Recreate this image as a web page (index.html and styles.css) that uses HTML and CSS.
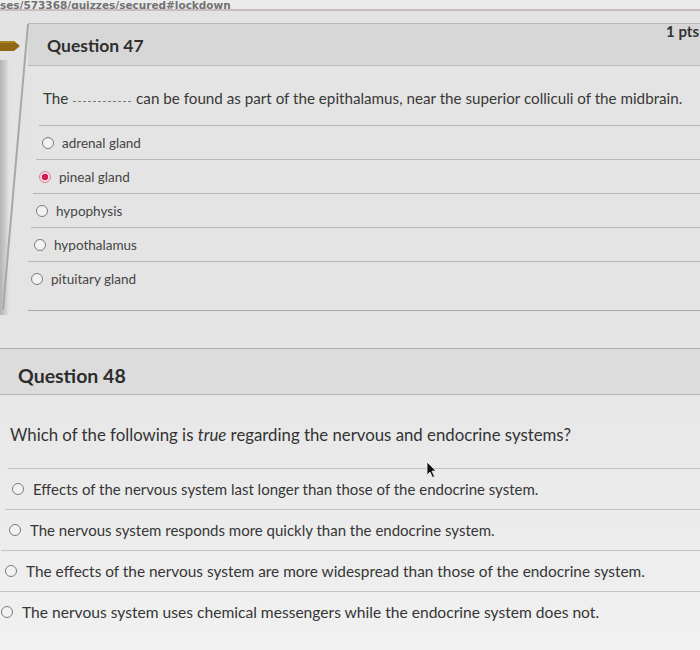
FILE: index.html
```html
<!DOCTYPE html>
<html lang="en">
<head>
<meta charset="utf-8">
<title>Quiz</title>
<link rel="stylesheet" href="styles.css">
</head>
<body>
<div class="page">
  <div class="urlbar"><span class="url">ses/573368/quizzes/secured#lockdown</span></div>
  <div class="q47wrap">
    <div class="flagcol">
      <svg class="flag" width="22" height="12" viewBox="0 0 22 12"><polygon points="0,1 15,1 21,6 15,11 0,11" fill="#8e6812"/><polygon points="0,1 15,1 17,3 0,3" fill="#a98324"/></svg>
    </div>
    <div class="card q47">
      <div class="qhead">
        <h2 class="qtitle">Question 47</h2>
        <span class="pts">1 pts</span>
      </div>
      <div class="qbody">
        <p class="qtext">The <span class="blank"></span> can be found as part of the epithalamus, near the superior colliculi of the midbrain.</p>
        <ul class="answers">
          <li class="ans"><span class="radio"></span>adrenal gland</li>
          <li class="ans"><span class="radio checked"></span>pineal gland</li>
          <li class="ans"><span class="radio"></span>hypophysis</li>
          <li class="ans"><span class="radio"></span>hypothalamus</li>
          <li class="ans"><span class="radio"></span>pituitary gland</li>
        </ul>
      </div>
    </div>
  </div>
  <div class="card q48">
    <div class="qhead">
      <h2 class="qtitle">Question 48</h2>
    </div>
    <div class="qbody">
      <p class="qtext">Which of the following is <em>true</em> regarding the nervous and endocrine systems?</p>
      <ul class="answers">
        <li class="ans"><span class="radio"></span>Effects of the nervous system last longer than those of the endocrine system.</li>
        <li class="ans"><span class="radio"></span>The nervous system responds more quickly than the endocrine system.</li>
        <li class="ans"><span class="radio"></span>The effects of the nervous system are more widespread than those of the endocrine system.</li>
        <li class="ans"><span class="radio"></span>The nervous system uses chemical messengers while the endocrine system does not.</li>
      </ul>
    </div>
  </div>
  <svg class="cursor" width="12" height="18" viewBox="0 0 12 18"><path d="M1 1 L1 14 L4 11 L6.5 16.5 L8.5 15.5 L6 10 L10 10 Z" fill="#111" stroke="#eee" stroke-width="0.8"/></svg>
</div>
</body>
</html>
```
FILE: styles.css
```css
* { box-sizing: border-box; margin: 0; padding: 0; }
html, body { width: 700px; height: 650px; overflow: hidden; }
body {
  background: #e6e6e6;
  font-family: Lato, "Open Sans", "Liberation Sans", sans-serif;
  color: #3a3a3a;
}
.page {
  position: relative;
  width: 700px;
  height: 650px;
  overflow: hidden;
  background: linear-gradient(180deg, #e3e3e3 0%, #e4e4e4 50%, #eaeaea 72%, #f1f1f1 100%);
}
.page::before {
  content: "";
  position: absolute;
  left: 0;
  top: 60px;
  width: 9px;
  height: 255px;
  background: linear-gradient(90deg, #b3b3b3 0%, #cdcdcd 60%, rgba(220,220,220,0) 100%);
}
.urlbar {
  height: 11px;
  border-bottom: 2px solid #c9bdbd;
  background: #ececec;
  overflow: hidden;
}
.url {
  display: block;
  font-family: "DejaVu Sans", sans-serif;
  font-weight: bold;
  font-size: 10.5px;
  line-height: 10px;
  margin-top: 0;
  color: #727272;
}
.q47wrap {
  display: flex;
  margin-top: 12px;
}
.flagcol {
  width: 28px;
  flex: none;
  padding-top: 17px;
  position: relative;
}
.flag { display: block; margin-left: -1px; }
.card {
  position: relative;
  flex: 1;
}
.q47 {
  background: #e4e4e4;
  border-top: 1px solid #b9b9b9;
  border-bottom: 1px solid #a9a9a9;
}
.q47::before {
  content: "";
  position: absolute;
  left: -1px;
  top: 0;
  bottom: 0;
  width: 1.5px;
  background: #a8a8a8;
  transform-origin: top left;
  transform: skewX(-5deg);
}
.qhead {
  display: flex;
  justify-content: space-between;
  align-items: center;
  background: #d7d7d7;
  border-bottom: 1px solid #bcbcbc;
}
.q47 .qhead {
  height: 42px;
  padding-left: 19px;
}
.qtitle {
  font-weight: 700;
  color: #2f2f2f;
}
.q47 .qtitle { font-size: 17.5px; line-height: 20px; padding-top: 2px; }
.pts {
  align-self: flex-start;
  font-size: 15px;
  font-weight: 700;
  line-height: 14px;
  margin-right: 1px;
  color: #333;
}
.q47 .qbody {
  padding: 23px 0 15px 0;
}
.q47 .qtext {
  font-size: 15.2px;
  line-height: 18px;
  padding-left: 15px;
  color: #383838;
}
.blank {
  display: inline-block;
  width: 58px;
  height: 1px;
  border-bottom: 1px dashed #7a7a7a;
  vertical-align: 2px;
  margin: 0 1px;
}
.answers { list-style: none; }
.q47 .answers { margin-top: 18px; }
.ans {
  display: flex;
  align-items: center;
  border-top: 1px solid #b8b8b8;
}
.q47 .ans {
  height: 34px;
  padding-left: 3px;
  font-size: 13.5px;
  color: #454545;
}
.q47 .ans:nth-child(1) { margin-left: 11px; }
.q47 .ans:nth-child(2) { margin-left: 8px; }
.q47 .ans:nth-child(3) { margin-left: 5px; }
.q47 .ans:nth-child(4) { margin-left: 3px; }
.q47 .ans:nth-child(5) { margin-left: 0; }
.radio {
  flex: none;
  width: 12px;
  height: 12px;
  border-radius: 50%;
  border: 1.5px solid #7c7c7c;
  background: #f2f2f2;
  margin-right: 8px;
}
.radio.checked {
  border-color: #d9819a;
  background: radial-gradient(circle, #d01f55 0 3px, #f6d9e1 3.5px);
}
.q48 {
  margin-top: 37px;
}
.q48 .qhead {
  height: 47px;
  border-top: 1px solid #adadad;
  border-bottom: 1px solid #b3b3b3;
  background: #dcdcdc;
  padding: 8px 0 0 18px;
}
.q48 .qtitle {
  font-size: 19.5px;
  line-height: 22px;
  color: #2d2d2d;
}
.q48 .qbody { padding-top: 30px; }
.q48 .qtext {
  font-size: 16.8px;
  line-height: 20px;
  padding-left: 10px;
  color: #333;
}
.q48 .qtext em { font-style: italic; }
.q48 .answers { margin-top: 23px; }
.q48 .ans {
  height: 41px;
  padding-left: 4px;
  font-size: 15px;
  color: #363636;
  border-top-color: #c3c3c3;
}
.q48 .ans .radio { width: 12px; height: 12px; margin-right: 9px; }
.q48 .ans:nth-child(1) { margin-left: 8px; }
.q48 .ans:nth-child(2) { margin-left: 5px; }
.q48 .ans:nth-child(3) { margin-left: 1px; font-size: 15.4px; }
.q48 .ans:nth-child(4) { margin-left: -3px; font-size: 15.6px; }
.cursor {
  position: absolute;
  left: 426px;
  top: 461px;
}
```
